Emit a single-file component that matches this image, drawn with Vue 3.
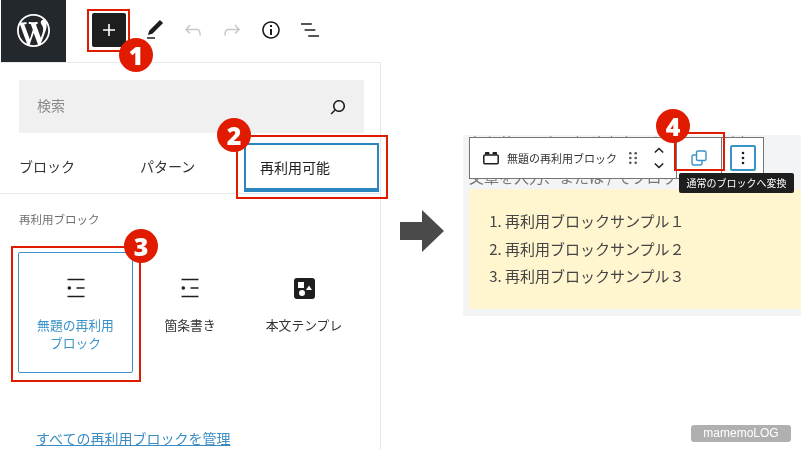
<script setup>
const tabs = ['ブロック', 'パターン']
const samples = ['再利用ブロックサンプル１', '再利用ブロックサンプル２', '再利用ブロックサンプル３']
</script>

<template>
  <div class="page">
    <section class="editor">
      <header class="topbar">
        <div class="logo">
          <svg width="33" height="33" viewBox="0 0 20 20" fill="#fff"><path d="M20 10c0-5.51-4.49-10-10-10C4.48 0 0 4.49 0 10c0 5.52 4.48 10 10 10 5.51 0 10-4.48 10-10zM7.78 15.37L4.37 6.22c.55-.02 1.17-.08 1.17-.08.5-.06.44-1.13-.06-1.11 0 0-1.45.11-2.37.11-.18 0-.37 0-.58-.01C4.12 2.69 6.87 1.11 10 1.11c2.33 0 4.45.87 6.05 2.34-.68-.11-1.65.39-1.65 1.58 0 .74.45 1.36.9 2.1.35.61.55 1.36.55 2.46 0 1.49-1.4 5-1.4 5l-3.03-8.37c.54-.02.82-.17.82-.17.5-.05.44-1.25-.06-1.22 0 0-1.44.12-2.38.12-.87 0-2.33-.12-2.33-.12-.5-.03-.56 1.2-.06 1.22l.92.08 1.26 3.41zM17.41 10c.24-.64.74-1.87.43-4.25.7 1.29 1.05 2.71 1.05 4.25 0 3.29-1.73 6.24-4.4 7.78.97-2.59 1.94-5.2 2.92-7.78zM6.1 18.09C3.12 16.65 1.11 13.53 1.11 10c0-1.3.23-2.48.72-3.59C3.25 10.3 4.67 14.2 6.1 18.09zm4.03-6.63l2.58 6.98c-.86.29-1.76.45-2.71.45-.79 0-1.57-.11-2.29-.33.81-2.38 1.62-4.74 2.42-7.1z"/></svg>
        </div>
        <div class="plus">
          <svg width="24" height="24" viewBox="0 0 24 24" fill="#fff"><path d="M18 11.2h-5.2V6h-1.6v5.2H6v1.6h5.2V18h1.6v-5.2H18z"/></svg>
        </div>
        <div class="tools">
          <svg class="pencil" width="24" height="24" viewBox="0 0 24 24" fill="#1e1e1e"><path d="M20.1 5.1L16.9 2 6.2 12.7l-1.3 4.4 4.5-1.3L20.1 5.1zM4 20.8h8v-1.5H4v1.5z"/></svg>
          <svg width="24" height="24" viewBox="0 0 24 24" fill="#c8c8c8"><path d="M18.3 11.7c-.6-.6-1.4-.9-2.3-.9H6.7l2.9-3.3-1.1-1-4.5 5L8.5 16l1-1-2.7-2.7H16c.5 0 .9.2 1.3.5 1 1 1 3.4 1 4.5v.3h1.5v-.2c0-1.5 0-4.3-1.5-5.7z"/></svg>
          <svg width="24" height="24" viewBox="0 0 24 24" fill="#c8c8c8"><path d="M15.6 6.5l-1.1 1 2.9 3.3H8c-.9 0-1.7.3-2.3.9-1.4 1.5-1.4 4.2-1.4 5.6v.2h1.5v-.3c0-1.1 0-3.5 1-4.5.3-.3.7-.5 1.3-.5h9.2L14.5 15l1.1 1.1 4.6-4.6-4.6-5z"/></svg>
          <svg width="24" height="24" viewBox="0 0 24 24" fill="#1e1e1e"><path d="M12 3.2c-4.8 0-8.8 3.9-8.8 8.8 0 4.8 3.9 8.8 8.8 8.8 4.8 0 8.8-3.9 8.8-8.8 0-4.8-4-8.8-8.8-8.8zm0 16c-4 0-7.2-3.3-7.2-7.2C4.8 8 8 4.8 12 4.8s7.2 3.3 7.2 7.2c0 4-3.2 7.2-7.2 7.2zM11 17h2v-6h-2v6zm0-8h2V7h-2v2z"/></svg>
          <svg width="24" height="24" viewBox="0 0 24 24" fill="#1e1e1e"><path d="M13.8 5.2H3v1.5h10.8V5.2zm-3.6 12v1.5H21v-1.5H10.2zm7.2-6H6.6v1.5h10.8v-1.5z"/></svg>
        </div>
      </header>

      <div class="inserter">
        <div class="search">
          <span>検索</span>
          <svg width="24" height="24" viewBox="0 0 24 24" fill="#1e1e1e"><path d="M13 5c-3.3 0-6 2.7-6 6 0 1.4.5 2.7 1.3 3.7l-3.8 3.8 1.1 1.1 3.8-3.8c1 .8 2.3 1.3 3.7 1.3 3.3 0 6-2.7 6-6S16.3 5 13 5zm0 10.5c-2.5 0-4.5-2-4.5-4.5s2-4.5 4.5-4.5 4.5 2 4.5 4.5-2 4.5-4.5 4.500z"/></svg>
        </div>
        <nav class="tabs">
          <span v-for="t in tabs" :key="t" class="tab">{{ t }}</span>
          <span class="tab active">再利用可能</span>
        </nav>
        <h2 class="section">再利用ブロック</h2>
        <div class="cards">
          <div class="card selected">
            <svg class="li" width="20" height="20" viewBox="0 0 20 20" fill="#1e1e1e"><path d="M1.500 .8h17v1.500h-17zM10.500 9.300h8v1.500h-8zM1.500 17.800h17v1.500h-17z"/><circle cx="3.300" cy="10" r="1.800"/></svg>
            <span>無題の再利用<br>ブロック</span>
          </div>
          <div class="card">
            <svg class="li" width="20" height="20" viewBox="0 0 20 20" fill="#1e1e1e"><path d="M1.500 .8h17v1.500h-17zM10.500 9.300h8v1.500h-8zM1.500 17.800h17v1.500h-17z"/><circle cx="3.300" cy="10" r="1.800"/></svg>
            <span>箇条書き</span>
          </div>
          <div class="card">
            <svg class="block" width="21" height="21" viewBox="0 0 21 21"><rect width="21" height="21" rx="3" fill="#1e1e1e"/><rect x="4" y="4" width="6" height="6" fill="#fff"/><path d="M15 7.500l3 4.500h-6z" fill="#fff"/><circle cx="8" cy="15" r="3" fill="#fff"/></svg>
            <span>本文テンプレ</span>
          </div>
        </div>
        <a class="manage">すべての再利用ブロックを管理</a>
      </div>
    </section>

    <svg class="arrow" width="44" height="42" viewBox="0 0 44 42" fill="#4a4a4a"><path d="M0 12h22V0l22 21-22 21V30H0z"/></svg>

    <section class="canvas">
      <p class="ghost top">各段落を入力、投稿内容、タイトルを追加</p>
      <p class="ghost">文章を入力、または / でブロックを選択</p>
      <ol class="yellow">
        <li v-for="s in samples" :key="s">{{ s }}</li>
      </ol>
      <div class="toolbar">
        <svg width="18" height="14" viewBox="0 0 18 14" fill="none" stroke="#1e1e1e" stroke-width="1.500"><rect x="1.800" y="4" width="14.400" height="8.800" rx="1"/><path d="M3.500 3.500V1.500h3.500v2M11 3.500V1.500h3.500v2" fill="#1e1e1e" stroke-width="1"/></svg>
        <span class="name">無題の再利用ブロック</span>
        <svg class="drag" width="8" height="12" viewBox="0 0 8 12" fill="#555"><circle cx="1.300" cy="1.300" r="1.300"/><circle cx="6.700" cy="1.300" r="1.300"/><circle cx="1.300" cy="6" r="1.300"/><circle cx="6.700" cy="6" r="1.300"/><circle cx="1.300" cy="10.700" r="1.300"/><circle cx="6.700" cy="10.700" r="1.300"/></svg>
        <svg class="mover" width="12" height="22" viewBox="0 0 12 22" fill="none" stroke="#1e1e1e" stroke-width="1.500"><path d="M1.800 5.500L6 1.500 10.200 5.500M1.800 16.500L6 20.500 10.200 16.500"/></svg>
        <div class="convert">
          <svg width="18" height="18" viewBox="0 0 18 18" fill="none" stroke="#3a93c8" stroke-width="1.400"><rect x="6.500" y="2" width="9.500" height="9.500" rx="1.500"/><path d="M6.500 6H4a2 2 0 0 0-2 2v6a2 2 0 0 0 2 2h6a2 2 0 0 0 2-2v-2"/></svg>
        </div>
        <div class="more">
          <svg width="4" height="14" viewBox="0 0 4 14" fill="#1e1e1e"><circle cx="2" cy="2" r="1.300"/><circle cx="2" cy="7" r="1.300"/><circle cx="2" cy="12" r="1.300"/></svg>
        </div>
      </div>
      <div class="tooltip">通常のブロックへ変換</div>
    </section>

    <i class="mark m1"></i>
    <i class="mark m2"></i>
    <i class="mark m3"></i>
    <i class="mark m4"></i>
    <b class="badge b1">1</b>
    <b class="badge b2">2</b>
    <b class="badge b3">3</b>
    <b class="badge b4">4</b>
    <div class="brand">mamemoLOG</div>
  </div>
</template>

<style scoped>
.page {
  position: relative;
  display: flex;
  align-items: flex-start;
  width: 801px;
  height: 450px;
  overflow: hidden;
  background: #fff;
  color: #1e1e1e;
  font-family: "Noto Sans CJK JP", "Noto Sans", sans-serif;
  filter: blur(0.35px);
}
.editor {
  display: flex;
  flex-direction: column;
  flex: none;
  width: 381px;
  height: 450px;
}
.topbar {
  display: flex;
  align-items: center;
  flex: none;
  height: 60px;
  margin-bottom: 2px;
  padding-left: 1px;
}
.logo {
  display: flex;
  align-items: center;
  justify-content: center;
  align-self: flex-start;
  box-sizing: border-box;
  width: 65px;
  height: 62px;
  padding-bottom: 2px;
  background: #23282d;
}
.plus {
  display: flex;
  align-items: center;
  justify-content: center;
  width: 34px;
  height: 34px;
  margin-left: 26px;
  border-radius: 2px;
  background: #1e1e1e;
}
.tools {
  display: flex;
  gap: 15px;
  margin-left: 16px;
}
.pencil { transform: translateX(1px); }
.inserter {
  flex: 1;
  border-top: 1px solid #e8e8e8;
  border-right: 1px solid #e8e8e8;
}
.search {
  display: flex;
  align-items: center;
  justify-content: space-between;
  height: 53px;
  margin: 17px 16px 0 19px;
  padding: 0 14px 0 18px;
  background: #f0f0f0;
  color: #8a8a8a;
  font-size: 14px;
}
.search span { margin-bottom: 3px; }
.tabs {
  display: flex;
  height: 50px;
  margin-top: 10px;
  border-bottom: 1px solid #e8e8e8;
  font-size: 14px;
}
.tab {
  display: flex;
  align-items: center;
  flex: none;
  box-sizing: border-box;
  width: 140px;
  height: 49px;
  padding: 0 0 3px 19px;
  color: #333;
}
.tab + .tab {
  width: 104px;
  padding-left: 0;
}
.tab.active {
  width: 135px;
  padding: 0 0 0 14px;
  border: 2px solid #2b86bd;
  border-bottom-width: 4px;
  color: #222;
}
.section {
  margin: 16px 0 0 19px;
  color: #6f6f6f;
  font-size: 11.500px;
  font-weight: 400;
  line-height: 18px;
}
.cards {
  display: flex;
  margin: 24px 0 0 18px;
}
.card {
  display: flex;
  flex-direction: column;
  align-items: center;
  box-sizing: border-box;
  width: 115px;
  height: 121px;
  padding-top: 25px;
  border: 1px solid transparent;
  border-radius: 2px;
  color: #333;
  font-size: 12.800px;
  line-height: 18px;
  text-align: center;
}
.card + .card { width: 114px; }
.card span { margin-top: 18px; }
.block { margin-bottom: -1px; }
.card.selected {
  border-color: #3a93c8;
  color: #3a93c8;
}
.manage {
  display: block;
  margin: 56px 0 0 36px;
  color: #3a8cc2;
  font-size: 14px;
  line-height: 18px;
  text-decoration: underline;
}
.arrow {
  flex: none;
  margin: 210px 19px 0;
}
.canvas {
  position: relative;
  flex: none;
  box-sizing: border-box;
  width: 338px;
  height: 181px;
  margin-top: 135px;
  padding-left: 6px;
  background: #f3f4f6;
}
.ghost {
  height: 18px;
  margin: 0;
  color: #777;
  font-size: 15px;
  line-height: 18px;
  white-space: nowrap;
}
.ghost.top {
  margin-top: -1px;
  margin-bottom: 16px;
  overflow: hidden;
}
.yellow {
  box-sizing: border-box;
  height: 120px;
  margin: 3px 0 0;
  padding: 18px 0 0 36px;
  background: #fff5cf;
  color: #444;
  font-size: 15px;
  line-height: 27.500px;
}
.toolbar {
  position: absolute;
  top: 2px;
  left: 6px;
  display: flex;
  align-items: center;
  box-sizing: border-box;
  width: 295px;
  height: 42px;
  padding-left: 12px;
  border: 1px solid #757575;
  background: #fff;
}
.name {
  margin-left: 7px;
  color: #333;
  font-size: 11px;
  white-space: nowrap;
}
.drag { margin-left: 12px; }
.mover { margin-left: 16px; }
.convert {
  display: flex;
  align-items: center;
  justify-content: center;
  flex: none;
  width: 46px;
  height: 40px;
  margin-left: 11px;
  border-left: 1px solid #757575;
  border-right: 1px solid #757575;
  box-sizing: border-box;
}
.more {
  display: flex;
  align-items: center;
  justify-content: center;
  flex: none;
  box-sizing: border-box;
  width: 26px;
  height: 26px;
  margin-left: 8px;
  border: 2px solid #3a93c8;
  border-radius: 2px;
}
.tooltip {
  position: absolute;
  top: 38px;
  left: 216px;
  box-sizing: border-box;
  width: 115px;
  height: 20px;
  border-radius: 2px;
  background: #1e1e1e;
  color: #fff;
  font-size: 10px;
  line-height: 20px;
  text-align: center;
  white-space: nowrap;
}
.mark {
  position: absolute;
  box-sizing: border-box;
  border: 2px solid #e01b00;
}
.m1 { left: 87px; top: 9px; width: 43px; height: 43px; }
.m2 { left: 236px; top: 135px; width: 152px; height: 64px; }
.m3 { left: 11px; top: 246px; width: 130px; height: 136px; }
.m4 { left: 674px; top: 132px; width: 51px; height: 39px; }
.badge {
  position: absolute;
  width: 34px;
  height: 34px;
  border-radius: 50%;
  background: #e01b00;
  color: #fff;
  font-family: "Open Sans", "Liberation Sans", sans-serif;
  font-size: 25px;
  font-weight: 800;
  line-height: 34px;
  text-align: center;
}
.b1 { left: 119px; top: 38px; }
.b2 { left: 217px; top: 118px; }
.b3 { left: 124px; top: 229px; }
.b4 { left: 656px; top: 109px; }
.brand {
  position: absolute;
  left: 691px;
  top: 425px;
  width: 100px;
  height: 17px;
  border-radius: 3px;
  background: #b0b0b0;
  color: #fff;
  font-family: "Liberation Sans", sans-serif;
  font-size: 12px;
  line-height: 17px;
  text-align: center;
}
</style>
